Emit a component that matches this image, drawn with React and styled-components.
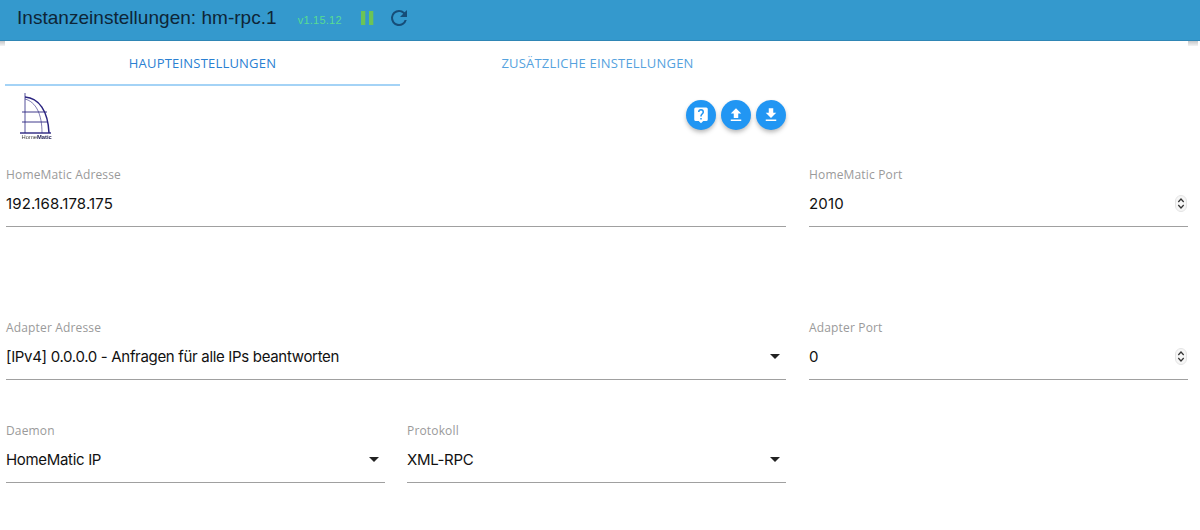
import React from "react";
import styled, { createGlobalStyle } from "styled-components";

const Global = createGlobalStyle`
  html, body { margin: 0; padding: 0; background: #fff; overflow: hidden; }
  body { font-family: Inter, Roboto, "Noto Sans", sans-serif; }
`;

const Page = styled.div`
  width: 1200px;
  height: 530px;
  overflow: hidden;
  background: #fff;
  position: relative;
`;

const Header = styled.header`
  height: 41px;
  background: #3499cd;
  border-bottom: 1px solid #2f86b5;
  box-sizing: border-box;
  display: flex;
  align-items: center;
  padding: 0 0 4px 17px;
`;

const EdgeShadows = styled.div`
  position: absolute;
  left: 0;
  right: 2px;
  top: 41px;
  height: 5px;
  display: flex;
  justify-content: space-between;
`;

const EdgeShadow = styled.span`
  width: ${(p) => p.$width}px;
  background: linear-gradient(#c4c6c8, #f4f4f4);
`;

const Title = styled.h1`
  margin: 0;
  font: 400 19px "Liberation Sans", Arial, sans-serif;
  letter-spacing: 0.03px;
  color: #0e2537;
`;

const Version = styled.span`
  margin-left: 21px;
  margin-top: 3px;
  font: 400 11px "Liberation Sans", Arial, sans-serif;
  letter-spacing: 0.25px;
  color: #58dc92;
`;

const PauseIcon = styled.svg`
  margin-left: 18px;
  width: 14px;
  height: 14px;
  fill: #6cc456;
`;

const ReloadIcon = styled.svg`
  margin-left: 13px;
  width: 24px;
  height: 24px;
  fill: #164d78;
`;

const Content = styled.main`
  padding: 0 12px 0 5px;
`;

const Tabs = styled.nav`
  display: flex;
  height: 45px;
`;

const Tab = styled.div`
  width: 395px;
  box-sizing: border-box;
  display: flex;
  align-items: center;
  justify-content: center;
  font-family: "Open Sans", "Noto Sans", sans-serif;
  font-size: 13px;
  font-weight: 400;
  letter-spacing: 0.2px;
  color: ${(p) => (p.$active ? "#2a80d2" : "#55a2de")};
  border-bottom: 2px solid ${(p) => (p.$active ? "#a4d3f6" : "transparent")};
`;

const Toolbar = styled.div`
  display: flex;
  align-items: flex-start;
  justify-content: space-between;
  width: 781px;
  height: 82px;
`;

const Logo = styled.svg`
  width: 36px;
  height: 50px;
  margin: 6px 0 0 13px;
  filter: blur(0.3px);
`;

const LogoText = styled.text`
  font: 400 5.800px "Liberation Sans", Arial, sans-serif;
  fill: #444;
`;

const LogoBold = styled.tspan`
  font-weight: 700;
  fill: #1c1c50;
`;

const Buttons = styled.div`
  display: flex;
  gap: 5px;
  margin-top: 14px;
`;

const RoundButton = styled.button`
  width: 30px;
  height: 30px;
  border: 0;
  padding: 0;
  border-radius: 50%;
  background: #2196f3;
  color: #fff;
  display: flex;
  align-items: center;
  justify-content: center;
  box-shadow: 0 2px 4px -1px rgba(0, 0, 0, 0.2), 0 3px 5px rgba(0, 0, 0, 0.14);
`;

const ButtonIcon = styled.svg`
  width: 18px;
  height: 18px;
  fill: currentColor;
`;

const Row = styled.div`
  display: grid;
  grid-template-columns: 780px 379px;
  column-gap: 23px;
  margin-left: 1px;
  margin-top: ${(p) => p.$top}px;
`;

const SplitCell = styled.div`
  display: grid;
  grid-template-columns: 379px 379px;
  column-gap: 22px;
`;

const Field = styled.div`
  height: 59px;
  box-sizing: border-box;
  border-bottom: 1px solid #a0a0a0;
  position: relative;
`;

const Label = styled.label`
  display: block;
  height: 15px;
  font-family: "Open Sans", "Noto Sans", sans-serif;
  font-size: 12px;
  line-height: 13px;
  letter-spacing: 0.16px;
  color: #9a9a9a;
`;

const Value = styled.div`
  margin-top: 11px;
  font-size: 15px;
  line-height: 20px;
  letter-spacing: ${(p) => (p.$numeric ? "0.15px" : "-0.32px")};
  color: #111;
`;

const Caret = styled.span`
  position: absolute;
  right: 6px;
  top: 33px;
  width: 0;
  height: 0;
  border-left: 5px solid transparent;
  border-right: 5px solid transparent;
  border-top: 5px solid #222;
`;

const Spinner = styled.svg`
  position: absolute;
  right: 1px;
  top: 27px;
  width: 12px;
  height: 17px;
`;

function TextField({ label, value, kind, numeric }) {
  return (
    <Field>
      <Label>{label}</Label>
      <Value $numeric={numeric}>{value}</Value>
      {kind === "select" && <Caret />}
      {kind === "number" && (
        <Spinner viewBox="0 0 12 17">
          <rect x="0.500" y="0.500" width="11" height="16" rx="5.500" fill="#f6f6f6" stroke="#e4e4e4" />
          <path d="M3.300 7 6 4l2.700 3M3.300 10 6 13l2.700-3" fill="none" stroke="#333" strokeWidth="1.200" />
        </Spinner>
      )}
    </Field>
  );
}

export default function App() {
  return (
    <Page>
      <Global />
      <Header>
        <Title>Instanzeinstellungen: hm-rpc.1</Title>
        <Version>v1.15.12</Version>
        <PauseIcon viewBox="0 0 14 14">
          <rect x="1" y="0" width="4.300" height="14" />
          <rect x="9" y="0" width="4.300" height="14" />
        </PauseIcon>
        <ReloadIcon viewBox="0 0 24 24">
          <path d="M17.650 6.350A7.960 7.960 0 0 0 12 4a8 8 0 1 0 7.730 10h-2.080A6 6 0 1 1 12 6c1.660 0 3.140.690 4.220 1.780L13 11h7V4l-2.350 2.350z" />
        </ReloadIcon>
      </Header>
      <EdgeShadows>
        <EdgeShadow $width={5} />
        <EdgeShadow $width={10} />
      </EdgeShadows>
      <Content>
        <Tabs>
          <Tab $active>HAUPTEINSTELLUNGEN</Tab>
          <Tab>ZUSÄTZLICHE EINSTELLUNGEN</Tab>
        </Tabs>
        <Toolbar>
          <Logo viewBox="0 0 36 50">
            <g fill="none" stroke="#2a2480">
              <path d="M7 1v40" strokeWidth="0.800" />
              <path d="M7 5c14 1 23 14 24 36" strokeWidth="1.500" />
              <path d="M7 7c11 3 17 15 17 34" strokeWidth="0.600" />
              <path d="M4 20h25M4 30h26" strokeWidth="0.900" />
              <path d="M2 41h31" strokeWidth="1.400" />
            </g>
            <LogoText x="3.500" y="47">Home<LogoBold>Matic</LogoBold></LogoText>
          </Logo>
          <Buttons>
            <RoundButton aria-label="Hilfe">
              <ButtonIcon viewBox="0 0 24 24">
                <path d="M19 2H5a2 2 0 0 0-2 2v14a2 2 0 0 0 2 2h4l3 3 3-3h4a2 2 0 0 0 2-2V4a2 2 0 0 0-2-2zm-6 16h-2v-2h2v2zm2.070-7.750-.9.920C13.450 11.900 13 12.500 13 14h-2v-.500c0-1.100.450-2.100 1.170-2.830l1.240-1.260c.370-.360.590-.860.590-1.410a2 2 0 1 0-4 0H8a4 4 0 1 1 8 0c0 .880-.360 1.680-.930 2.250z" />
              </ButtonIcon>
            </RoundButton>
            <RoundButton aria-label="Hochladen">
              <ButtonIcon viewBox="0 0 24 24">
                <path d="M9 16h6v-6h4l-7-7-7 7h4v6zm-4 2h14v2H5v-2z" />
              </ButtonIcon>
            </RoundButton>
            <RoundButton aria-label="Herunterladen">
              <ButtonIcon viewBox="0 0 24 24">
                <path d="M19 9h-4V3H9v6H5l7 7 7-7zM5 18v2h14v-2H5z" />
              </ButtonIcon>
            </RoundButton>
          </Buttons>
        </Toolbar>
        <Row $top={0}>
          <TextField label="HomeMatic Adresse" value="192.168.178.175" numeric />
          <TextField label="HomeMatic Port" value="2010" kind="number" numeric />
        </Row>
        <Row $top={94}>
          <TextField label="Adapter Adresse" value="[IPv4] 0.0.0.0 - Anfragen für alle IPs beantworten" kind="select" />
          <TextField label="Adapter Port" value="0" kind="number" numeric />
        </Row>
        <Row $top={44}>
          <SplitCell>
            <TextField label="Daemon" value="HomeMatic IP" kind="select" />
            <TextField label="Protokoll" value="XML-RPC" kind="select" />
          </SplitCell>
        </Row>
      </Content>
    </Page>
  );
}
